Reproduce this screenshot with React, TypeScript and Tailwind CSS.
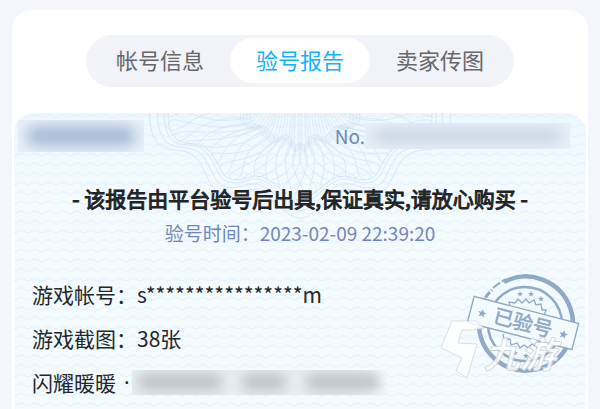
import { useState } from "react";

const TABS = ["帐号信息", "验号报告", "卖家传图"];

const STAR = "M0 -4 L1.1 -1.3 L4 -1.2 L1.7 0.6 L2.5 3.4 L0 1.8 L-2.5 3.4 L-1.7 0.6 L-4 -1.2 L-1.1 -1.3Z";

type Point = [number, number];

// Left halves of the two rosette outlines, with the origin at the top centre.
const OUTER: Point[] = [
  [-132, -2], [-132, 16], [-121, 30], [-100, 31], [-89, 38], [-82, 52],
  [-75, 65], [-60, 68], [-46, 62], [-32, 65], [-18, 78], [0, 90],
];
const INNER: Point[] = [
  [-53, -2], [-54, 8], [-46, 14], [-36, 14], [-31, 23], [-24, 28],
  [-16, 23], [-10, 26], [-7, 32], [-4, 34], [-2, 34], [0, 30],
];

function outline(half: Point[]): Point[] {
  const right = half.slice(0, -1).reverse().map(([x, y]): Point => [-x, y]);
  return [...half, ...right];
}

function smooth(points: Point[]): string {
  let d = `M${points[0][0]} ${points[0][1]}`;
  for (let i = 1; i < points.length - 1; i++) {
    const [x, y] = points[i];
    const [nx, ny] = points[i + 1];
    d += ` Q${x} ${y} ${(x + nx) / 2} ${(y + ny) / 2}`;
  }
  const [lx, ly] = points[points.length - 1];
  return `${d} L${lx} ${ly}`;
}

// The point a fraction t of the way along the polyline, by length.
function at(points: Point[], t: number): Point {
  const lengths = points.slice(1).map(([x, y], i) => Math.hypot(x - points[i][0], y - points[i][1]));
  let rest = t * lengths.reduce((a, b) => a + b, 0);
  for (let i = 0; i < lengths.length; i++) {
    if (rest <= lengths[i] || i === lengths.length - 1) {
      const f = rest / lengths[i];
      return [
        points[i][0] + (points[i + 1][0] - points[i][0]) * f,
        points[i][1] + (points[i + 1][1] - points[i][1]) * f,
      ];
    }
    rest -= lengths[i];
  }
  return points[0];
}

function Guilloche() {
  const outer = outline(OUTER);
  const inner = outline(INNER);
  const mesh: string[] = [];
  const rays: string[] = [];
  for (let k = -3; k <= 27; k++) {
    const t = k / 24;
    for (const turn of [-1, 1]) {
      const a = at(inner, t);
      const b = at(outer, t + turn * 0.045);
      const c = at(outer, t - turn * 0.03);
      const d = at(outer, t + turn * 0.09);
      mesh.push(
        `M${a[0]} ${a[1]} C${c[0] * 0.7 + a[0] * 0.3} ${c[1] * 0.7 + a[1] * 0.3} ${d[0]} ${d[1]} ${b[0]} ${b[1]}`
      );
    }
  }
  for (let k = 0; k <= 36; k++) {
    const [x, y] = at(inner, k / 36);
    rays.push(`M${x * 0.75} -4 Q${x * 0.8} ${y * 0.5} ${x} ${y}`);
  }
  return (
    <svg className="absolute left-1/2 top-0 -translate-x-1/2" width="310" height="112" viewBox="-155 0 310 112" fill="none" stroke="#d3e3f2" strokeWidth="0.8" aria-hidden="true">
      {[1, 1.03, 1.08, 1.14].map((s) => (
        <path key={s} d={smooth(outer.map(([x, y]): Point => [x * s, y * (s * 1.5 - 0.5)]))} />
      ))}
      {[0.94, 1, 1.06, 1.12].map((s) => (
        <path key={s} d={smooth(inner.map(([x, y]): Point => [x * s, y * s]))} />
      ))}
      <path d={mesh.join(" ")} strokeWidth="0.7" />
      <path d={rays.join(" ")} strokeWidth="0.6" />
    </svg>
  );
}

function Waves() {
  return (
    <svg className="absolute inset-0 h-full w-full" aria-hidden="true">
      <defs>
        <pattern id="waves" width="14" height="9.6" patternUnits="userSpaceOnUse">
          <path d="M-1 4 Q0 5 1.5 4.4 L5 2.4 Q7 1.2 9 2.4 L12.5 4.4 Q14 5 15 4" fill="none" stroke="#e5effc" strokeWidth="1" />
        </pattern>
      </defs>
      <rect width="100%" height="100%" fill="url(#waves)" />
    </svg>
  );
}

function Stamp() {
  return (
    <svg className="absolute right-0 top-[154px]" width="150" height="114" viewBox="435 267 150 114" role="img" aria-label="已验号">
      <g fill="none" stroke="#8fa9c6">
        <path d="M503 282 A47 47 0 1 1 478 326" strokeWidth="4.5" />
        <path d="M478 310 A48 48 0 0 1 491 290" strokeWidth="3" strokeDasharray="13 1 7 2" />
        <path d="M492 288 A48 48 0 0 1 506 279" strokeWidth="2" strokeDasharray="9 2 5 1" />
        <circle cx="524" cy="324" r="37" strokeWidth="2.5" />
        <path d="M509 306 L508 302 L514 303 L517 299 L521 303 L525 299 L528 303 L533 300 L535 305 L540 304 L541 310 L545 310 L543 316" strokeWidth="1.3" />
        <path d="M502 334 L503 340 L509 339 L510 345 L516 343 L519 348 L523 345 L527 348 L531 344 L536 347 L538 342" strokeWidth="1.3" />
      </g>
      <g fill="#8fa9c6">
        <path d={STAR} transform="translate(519 294) scale(.75)" />
        <path d={STAR} transform="translate(530 294) scale(.75)" />
        <path d={STAR} transform="translate(540 299) scale(.75)" />
        <path d={STAR} transform="translate(514 353) scale(.75)" />
        <path d={STAR} transform="translate(525 356) scale(.75)" />
      </g>
      <g transform="translate(522 323) rotate(14.6)">
        <rect x="-54" y="-13.5" width="108" height="27" fill="#f3fbff" stroke="#8fa9c6" strokeWidth="1.4" />
        <path d={STAR} transform="translate(-42 1) scale(1.1)" fill="#8fa9c6" />
        <path d={STAR} transform="translate(42 1) scale(1.1)" fill="#8fa9c6" />
        <text x="0" y="7" textAnchor="middle" className="text-[20px]" fill="#8fa9c6" stroke="#8fa9c6" strokeWidth="0.6">已验号</text>
      </g>
      <g fill="#ffffff" fillOpacity="0.85" stroke="#c3c9cf" strokeWidth="0.6">
        <path d="M451 321 H475 L483 328 L473 330 H461 L457 343 L476 344 L466 378 L455 371 L461 358 L440 348 Z" />
        <text x="483" y="368" className="text-[36px] font-bold italic">九游</text>
      </g>
    </svg>
  );
}

export default function App() {
  const [active, setActive] = useState(1);
  return (
    <div className="flex min-h-screen flex-col bg-[#f5f6fb] px-3 pt-2.5 font-['Noto_Sans_CJK_SC',sans-serif]">
      <main className="flex flex-1 flex-col rounded-t-[20px] bg-white px-0.5 pt-[25px]">
        <nav className="mx-auto grid h-[52px] w-[428px] max-w-full grid-cols-3 rounded-full bg-[#f2f3f8] px-1 pb-1 pt-[3px]">
          {TABS.map((tab, i) => (
            <button
              key={tab}
              type="button"
              aria-pressed={i === active}
              onClick={() => setActive(i)}
              className={
                i === active
                  ? "rounded-full bg-white pb-[3px] text-[22px] leading-8 text-[#12b1fb]"
                  : "rounded-full pb-[3px] text-[22px] leading-8 text-[#66676b]"
              }
            >
              {tab}
            </button>
          ))}
        </nav>

        <section className="relative mt-[26px] flex-1 overflow-hidden rounded-t-[20px] bg-linear-to-b from-[#edf8fe] to-[#f3fbff] to-30%">
          <Waves />
          <Guilloche />
          <div className="relative">
            <div className="flex items-start justify-between pl-1 pr-4 pt-[7px]">
              <div className="flex h-8 w-[126px] items-center overflow-hidden bg-[#e6f1fa]">
                <div className="mx-2 h-5 flex-1 rounded-full bg-[#a9b9d6] blur-[7px]" />
              </div>
              <div className="flex items-center text-[19px] leading-8 text-[#7186b8]">
                <span>No.</span>
                <div className="flex h-[26px] w-[205px] items-center overflow-hidden bg-[#e7f1f9]">
                  <div className="mx-2 h-4 flex-1 rounded-full bg-[#cad6e6] blur-[7px]" />
                </div>
              </div>
            </div>

            <h1 className="mt-7 text-center text-[21px] font-normal leading-9 text-[#222426] [-webkit-text-stroke:1px_#222426]">
              - 该报告由平台验号后出具,保证真实,请放心购买 -
            </h1>
            <p className="text-center text-[19px] leading-[34px] text-[#7186b8]">
              验号时间：2023-02-09 22:39:20
            </p>

            <div className="mt-[22px] px-[18px] text-[21px] leading-[44px] text-[#25272a]">
              <p>游戏帐号：s****************m</p>
              <p>游戏截图：38张</p>
              <div className="flex items-center">
                <span>闪耀暖暖</span>
                <span className="ml-2 w-2 font-['Noto_Sans',sans-serif]">·</span>
                <div className="flex h-[25px] w-[256px] items-center gap-5 overflow-hidden bg-linear-to-r from-[#e6eef2] from-85% to-transparent pl-1.5">
                  <div className="h-[18px] w-[84px] rounded-lg bg-[#c0c5c9] blur-[6px]" />
                  <div className="h-[18px] w-11 rounded-lg bg-[#c0c5c9] blur-[6px]" />
                  <div className="h-[18px] w-[74px] rounded-lg bg-[#c0c5c9] blur-[6px]" />
                </div>
              </div>
            </div>
          </div>
          <Stamp />
        </section>
      </main>
    </div>
  );
}
